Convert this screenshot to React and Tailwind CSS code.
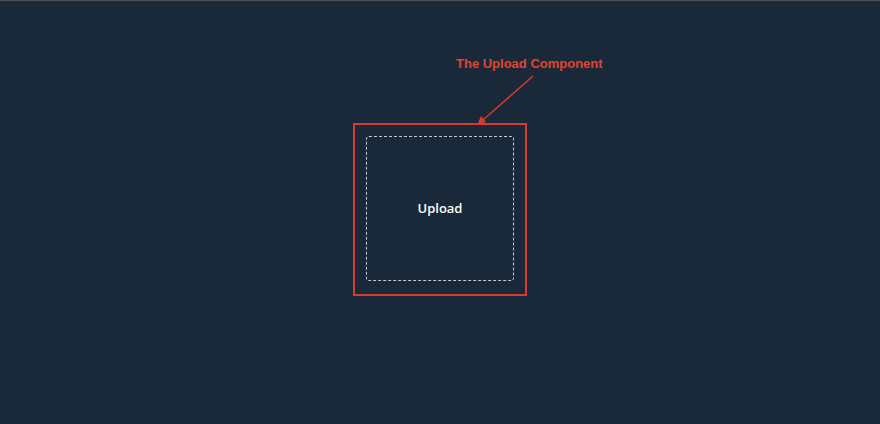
export default function App() {
  return (
    <div className="relative h-[424px] w-[880px] overflow-hidden border-t border-[#4a4d52] bg-[#1a293a] font-['Liberation_Sans',sans-serif]">
      {/* annotation label */}
      <div className="absolute left-[456px] top-[55px] text-[13px] font-bold leading-4 text-[#e2432c]">
        The Upload Component
      </div>
      {/* annotation arrow */}
      <svg className="pointer-events-none absolute left-0 top-0" width="880" height="424">
        <line x1="533" y1="75" x2="483" y2="119" stroke="#d63b2c" strokeWidth="1.5" />
        <polygon points="477,124 481,115 486,121" fill="#d63b2c" />
      </svg>

      <div className="mx-auto mt-[122px] flex h-[173px] w-[174px] border-2 border-[#d53b2c] p-[11px] pb-[13px]">
        <div className="flex flex-1 items-center justify-center rounded-[3px] border border-dashed border-[#c3ccd6]">
          <span className="font-['Open_Sans',sans-serif] text-[13px] font-semibold text-white">Upload</span>
        </div>
      </div>
    </div>
  );
}
